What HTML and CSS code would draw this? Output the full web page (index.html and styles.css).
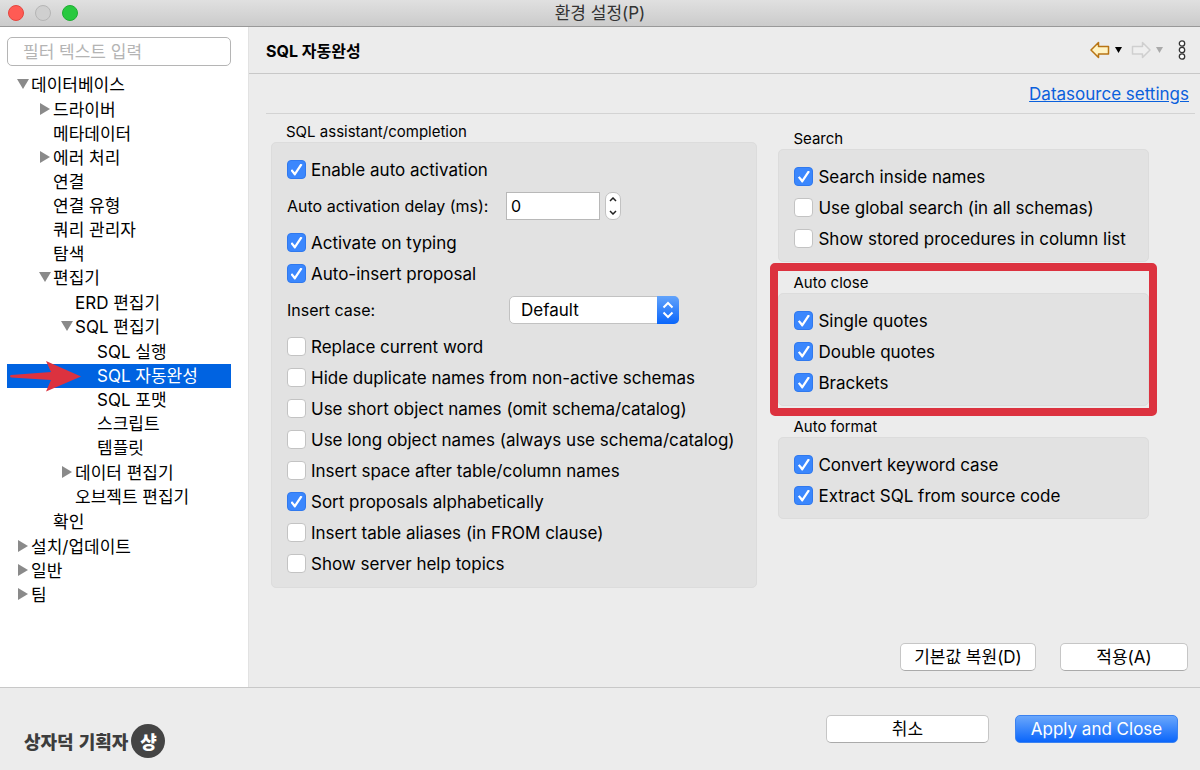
FILE: index.html
```html
<!DOCTYPE html>
<html lang="ko">
<head>
<meta charset="utf-8">
<title>환경 설정(P)</title>
<meta name="viewport" content="width=device-width,initial-scale=1">
<link rel="stylesheet" href="styles.css">
</head>
<body>

<header class="titlebar">
  <div class="lights">
    <button class="light close" aria-label="닫기"></button>
    <button class="light minimize" aria-label="최소화" disabled></button>
    <button class="light zoom" aria-label="확대"></button>
  </div>
  <h1>환경 설정(P)</h1>
</header>

<div class="window">
  <!-- Preference tree -->
  <nav class="sidebar">
    <input class="filter" type="text" placeholder="필터 텍스트 입력" aria-label="필터 텍스트 입력">
    <ul class="tree">
      <li><a href="#" class="open">데이터베이스</a>
        <ul>
          <li><a href="#" class="closed">드라이버</a></li>
          <li><a href="#">메타데이터</a></li>
          <li><a href="#" class="closed">에러 처리</a></li>
          <li><a href="#">연결</a></li>
          <li><a href="#">연결 유형</a></li>
          <li><a href="#">쿼리 관리자</a></li>
          <li><a href="#">탐색</a></li>
          <li><a href="#" class="open">편집기</a>
            <ul>
              <li><a href="#">ERD 편집기</a></li>
              <li><a href="#" class="open">SQL 편집기</a>
                <ul>
                  <li><a href="#">SQL 실행</a></li>
                  <li class="selected">
                    <a href="#" aria-current="page">SQL 자동완성</a>
                    <svg class="pointer" width="74" height="32" viewBox="0 0 74 32" aria-hidden="true"><path d="M3 15Q1 16 3 17.500L43 20L38 31.500L73 16.500L38 1L43 12Z" fill="#dc323f"/></svg>
                  </li>
                  <li><a href="#">SQL 포맷</a></li>
                  <li><a href="#">스크립트</a></li>
                  <li><a href="#">템플릿</a></li>
                </ul>
              </li>
              <li><a href="#" class="closed">데이터 편집기</a></li>
              <li><a href="#">오브젝트 편집기</a></li>
            </ul>
          </li>
          <li><a href="#">확인</a></li>
        </ul>
      </li>
      <li><a href="#" class="closed">설치/업데이트</a></li>
      <li><a href="#" class="closed">일반</a></li>
      <li><a href="#" class="closed">팀</a></li>
    </ul>
  </nav>

  <!-- SQL completion page -->
  <main class="page">
    <div class="page-head">
      <h2>SQL 자동완성</h2>
      <div class="history">
        <button aria-label="뒤로">
          <svg width="20" height="18" viewBox="0 0 20 18"><path d="M1 9L8.500 1.500V5.500H18.500V13H8.500V16.500Z" fill="#fff3c4" stroke="#b87414" stroke-width="1.500" stroke-linejoin="round"/></svg>
        </button>
        <button aria-label="뒤로 목록">
          <svg width="7" height="6" viewBox="0 0 7 6"><path d="M0 0H7L3.500 6Z" fill="#000"/></svg>
        </button>
        <button class="forward" aria-label="앞으로" disabled>
          <svg width="20" height="18" viewBox="0 0 20 18"><path d="M19 9L11.500 1.500V5.500H1.500V13H11.500V16.500Z" fill="#efefef" stroke="#cfcfcf" stroke-width="1.500" stroke-linejoin="round"/></svg>
        </button>
        <button aria-label="앞으로 목록" disabled>
          <svg width="7" height="6" viewBox="0 0 7 6"><path d="M0 0H7L3.500 6Z" fill="#aaa"/></svg>
        </button>
        <button class="more" aria-label="메뉴">
          <svg width="8" height="20" viewBox="0 0 8 20" fill="#fff" stroke="#333" stroke-width="1.300"><circle cx="4" cy="3.500" r="2.700"/><circle cx="4" cy="10" r="2.700"/><circle cx="4" cy="16.500" r="2.700"/></svg>
        </button>
      </div>
    </div>

    <div class="link-row"><a href="#">Datasource settings</a></div>

    <form class="settings" id="settings">
      <div class="column">
        <section class="group">
          <h3>SQL assistant/completion</h3>
          <div class="box">
            <label class="check"><input type="checkbox" checked>Enable auto activation</label>
            <div class="field">
              <label for="delay">Auto activation delay (ms):</label>
              <div class="spinner">
                <input id="delay" type="number" value="0">
                <div class="stepper">
                  <button type="button" aria-label="증가"><svg width="8" height="5" viewBox="0 0 8 5"><path d="M1 4L4 1L7 4"/></svg></button>
                  <button type="button" aria-label="감소"><svg width="8" height="5" viewBox="0 0 8 5"><path d="M1 1L4 4L7 1"/></svg></button>
                </div>
              </div>
            </div>
            <label class="check"><input type="checkbox" checked>Activate on typing</label>
            <label class="check"><input type="checkbox" checked>Auto-insert proposal</label>
            <div class="field">
              <label for="case">Insert case:</label>
              <div class="select">
                <select id="case"><option>Default</option><option>Upper case</option><option>Lower case</option></select>
                <span class="arrows"><svg width="12" height="18" viewBox="0 0 12 18"><path d="M1.500 6.500L6 2L10.500 6.500M1.500 11.500L6 16L10.500 11.500"/></svg></span>
              </div>
            </div>
            <label class="check"><input type="checkbox">Replace current word</label>
            <label class="check"><input type="checkbox">Hide duplicate names from non-active schemas</label>
            <label class="check"><input type="checkbox">Use short object names (omit schema/catalog)</label>
            <label class="check"><input type="checkbox">Use long object names (always use schema/catalog)</label>
            <label class="check"><input type="checkbox">Insert space after table/column names</label>
            <label class="check"><input type="checkbox" checked>Sort proposals alphabetically</label>
            <label class="check"><input type="checkbox">Insert table aliases (in FROM clause)</label>
            <label class="check"><input type="checkbox">Show server help topics</label>
          </div>
        </section>
      </div>

      <div class="column side">
        <section class="group">
          <h3>Search</h3>
          <div class="box">
            <label class="check"><input type="checkbox" checked>Search inside names</label>
            <label class="check"><input type="checkbox">Use global search (in all schemas)</label>
            <label class="check"><input type="checkbox">Show stored procedures in column list</label>
          </div>
        </section>
        <section class="group marked">
          <h3>Auto close</h3>
          <div class="box">
            <label class="check"><input type="checkbox" checked>Single quotes</label>
            <label class="check"><input type="checkbox" checked>Double quotes</label>
            <label class="check"><input type="checkbox" checked>Brackets</label>
          </div>
        </section>
        <section class="group">
          <h3>Auto format</h3>
          <div class="box">
            <label class="check"><input type="checkbox" checked>Convert keyword case</label>
            <label class="check"><input type="checkbox" checked>Extract SQL from source code</label>
          </div>
        </section>
      </div>
    </form>

    <div class="page-actions">
      <button class="btn restore" type="reset" form="settings">기본값 복원(D)</button>
      <button class="btn apply" type="button">적용(A)</button>
    </div>
  </main>
</div>

<footer class="footer">
  <div class="brand"><span>상자덕 기획자</span><span class="badge">샹</span></div>
  <div class="footer-actions">
    <button class="btn" type="button">취소</button>
    <button class="btn primary" type="button">Apply and Close</button>
  </div>
</footer>

</body>
</html>
```
FILE: styles.css
```css
:root{
  --bg:#ececec;--box:#e2e2e2;--line:#c8c8c8;--blue:#3b87fd;--select:#0063e1;--mark:#dc323f;
  --font:Inter,"Noto Sans CJK KR",sans-serif
}
*{box-sizing:border-box;margin:0}
body{min-height:100vh;display:flex;flex-direction:column;background:var(--bg);color:#000;font-family:var(--font);font-size:17px}
button,input,select{font:inherit;color:inherit}
button{padding:0;border:0;background:none}
ul{list-style:none;padding:0}
svg{display:block}

/* title bar */
.titlebar{display:grid;grid-template-columns:1fr auto 1fr;align-items:center;height:27px;padding:0 8px;background:linear-gradient(#e0e0e0,#cbcbcb);border-bottom:1px solid #999}
.titlebar h1{font-size:17px;font-weight:400;line-height:24px;color:#333}
.lights{display:flex;gap:11px}
.light{width:16px;height:16px;border:1px solid #b5b5b5;border-radius:50%;background:#cfcfcf}
.light.close{background:#ff5b54;border-color:#e5453e}
.light.zoom{background:#28c93f;border-color:#1eae33}

.window{flex:1;display:flex}

/* sidebar */
.sidebar{flex:none;width:249px;padding:10px 17px 24px 7px;background:#fff;border-right:1px solid #e2e2e2}
.filter{display:block;width:100%;height:29px;padding:0 15px;border:1px solid #b5b5b5;border-radius:5px;background:#fff;outline:none}
.filter::placeholder{color:#b4b4b4;opacity:1}
.tree{margin-top:7px;padding-left:24px}
.tree ul{padding:1px 0 1px 22px}
.tree li{position:relative}
.tree a{position:relative;display:block;height:24px;line-height:24px;color:inherit;text-decoration:none;white-space:nowrap}
.tree .open::before,.tree .closed::before{content:"";position:absolute;background:#8a8a8a}
.tree .open::before{left:-14px;top:6px;width:12px;height:10px;clip-path:polygon(0 0,100% 0,50% 100%)}
.tree .closed::before{left:-13px;top:5px;width:10px;height:12px;clip-path:polygon(0 0,100% 50%,0 100%)}
.tree .selected{margin-left:-90px;padding-left:90px;background:var(--select);color:#fff}
.pointer{position:absolute;left:1px;top:-4px}

/* page */
.page{flex:1;min-width:0;display:flex;flex-direction:column}
.page-head{display:flex;align-items:center;justify-content:space-between;height:47px;padding:0 14px 0 17px;border-bottom:1px solid var(--line)}
.page-head h2{font-size:16px;font-weight:700}
.history{display:flex;align-items:center;gap:5px}
.history .forward{margin-left:4px}
.history .more{margin-left:10px}
.link-row{display:flex;justify-content:flex-end;align-items:center;height:40px;margin:0 5px 0 17px;padding-right:6px;border-bottom:1px solid #d3d3d3}
.link-row a{color:#0a60dc}
.settings{display:grid;grid-template-columns:487fr 371fr;gap:21px;padding:8px 51px 0 22px}
.column{display:flex;flex-direction:column;gap:11px}
.column.side{padding-top:7px}
.group{position:relative}
.group h3{padding-left:15px;font-size:15px;font-weight:400;line-height:20px}
.box{padding:11px 15px 8px;border:1px solid #dcdcdc;border-radius:5px;background:var(--box)}
.side .box{padding-bottom:7px}
.marked::after{content:"";position:absolute;inset:-10px -8px;border:8px solid var(--mark);border-radius:5px;pointer-events:none}

/* form controls */
.check{display:flex;align-items:center;gap:5px;height:31px;white-space:nowrap}
.check input{appearance:none;flex:none;width:19px;height:19px;margin:0;border:1px solid #c3c3c3;border-radius:4px;background:#fff}
.check input:checked{border-color:#3079ee;background:var(--blue);display:grid;place-items:center}
.check input:checked::before{content:"";width:12px;height:12px;background:#fff;clip-path:polygon(0 59%,14% 47%,36% 72%,84% 0,100% 10%,40% 100%,32% 100%)}
.field{display:grid;grid-template-columns:219px 1fr;align-items:center;height:42px;font-size:16px}
.spinner{display:flex;align-items:center;gap:5px}
.spinner input{appearance:textfield;width:94px;height:28px;padding:0 4px;border:1px solid #b8b8b8;background:#fff;outline:none}
.spinner input::-webkit-inner-spin-button{display:none}
.stepper{display:flex;flex-direction:column;width:16px;height:28px;border:1px solid #c2c2c2;border-radius:7px;background:#fff}
.stepper button{flex:1;display:grid;place-items:center}
.stepper path{fill:none;stroke:#222;stroke-width:1.5}
.select{position:relative;width:170px;margin-left:3px}
.select select{appearance:none;display:block;width:100%;height:28px;padding:0 11px;border:1px solid #c2c2c2;border-radius:5px;background:#fff;font-size:17px}
.arrows{position:absolute;inset:0 0 0 auto;width:22px;display:grid;place-items:center;border-radius:0 5px 5px 0;background:linear-gradient(#62a3fb,#0a66fb);pointer-events:none}
.arrows path{fill:none;stroke:#fff;stroke-width:2}

/* buttons */
.btn{width:163px;height:28px;border:1px solid #c6c6c6;border-bottom-color:#aaa;border-radius:5px;background:#fff;line-height:24px}
.btn.primary{border-color:#3b82f0;background:linear-gradient(#6aa7fb,#0a66fb);color:#fff}
.page-actions{display:flex;justify-content:flex-end;gap:24px;margin-top:auto;padding:16px 12px}
.btn.restore{width:136px}
.btn.apply{width:128px}

/* footer */
.footer{display:flex;align-items:center;justify-content:space-between;height:83px;padding:0 22px 0 24px;border-top:1px solid var(--line)}
.footer-actions{display:flex;gap:26px}
.brand{display:flex;align-items:center;gap:3px;padding-top:24px;font-family:"Noto Sans CJK KR",sans-serif;font-size:18px;font-weight:900;color:#3d3d3d}
.badge{display:grid;place-items:center;width:34px;height:34px;border-radius:50%;background:#444;color:#fff;line-height:34px}
```
